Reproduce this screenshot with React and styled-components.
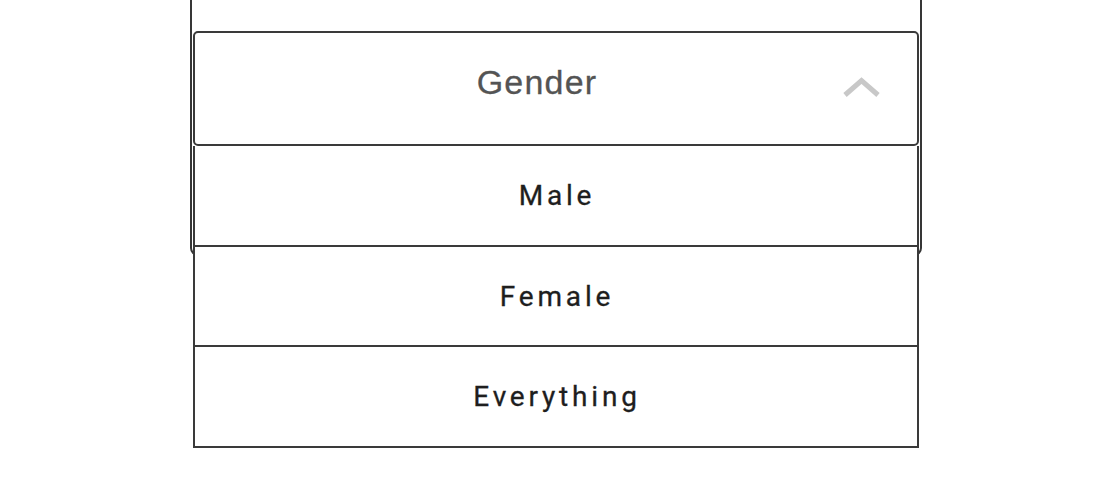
import React from "react";
import styled, { createGlobalStyle } from "styled-components";

const GlobalStyle = createGlobalStyle`
  html, body {
    margin: 0;
    padding: 0;
    background: #ffffff;
    overflow: hidden;
  }
  * { box-sizing: border-box; }
`;

const Page = styled.div`
  width: 1110px;
  height: 486px;
  padding-left: 190px;
  overflow: hidden;
`;

const Card = styled.section`
  width: 732px;
  margin-top: -30px;
  padding: 59px 1px 108px;
  border: 2px solid #363636;
  border-radius: 8px;
  background: #ffffff;
`;

const Field = styled.div`
  position: relative;
`;

const Trigger = styled.button`
  display: flex;
  align-items: center;
  width: 100%;
  height: 115px;
  padding: 0 37px 0 36px;
  border: 2px solid #3a3a3a;
  border-radius: 5px;
  background: #ffffff;
  cursor: pointer;
`;

const TriggerLabel = styled.span`
  flex: 1;
  text-align: center;
  font-family: "Liberation Sans", Arial, sans-serif;
  font-size: 34px;
  letter-spacing: 1.2px;
  color: #545454;
  padding-bottom: 13px;
  -webkit-text-stroke: 0.3px #545454;
`;

const Chevron = styled.svg`
  width: 37px;
  height: 20px;
  flex: none;
  margin-bottom: 4px;
`;

const Menu = styled.ul`
  position: absolute;
  top: 100%;
  left: 0;
  right: 0;
  margin: 0;
  padding: 0;
  list-style: none;
  background: #ffffff;
  z-index: 2;
`;

const Option = styled.li`
  display: flex;
  align-items: center;
  justify-content: center;
  height: ${(p) => p.$h}px;
  border: 2px solid #3a3a3a;
  border-top: none;
  font-family: Roboto, "Noto Sans", sans-serif;
  font-size: 28px;
  letter-spacing: 3.8px;
  color: #1e1e1e;
  padding-left: 2px;
  -webkit-text-stroke: 0.3px #1e1e1e;
`;

const options = [
  { label: "Male", h: 101 },
  { label: "Female", h: 100 },
  { label: "Everything", h: 101 },
];

export default function App() {
  return (
    <Page>
      <GlobalStyle />
      <Card>
        <Field>
          <Trigger type="button" aria-expanded="true">
            <TriggerLabel>Gender</TriggerLabel>
            <Chevron viewBox="0 0 37 20" aria-hidden="true">
              <polyline
                points="2,18 18.5,3.5 35,18"
                fill="none"
                stroke="#c8c8c8"
                strokeWidth="5"
              />
            </Chevron>
          </Trigger>
          <Menu role="listbox">
            {options.map((o) => (
              <Option key={o.label} role="option" $h={o.h}>
                {o.label}
              </Option>
            ))}
          </Menu>
        </Field>
      </Card>
    </Page>
  );
}
